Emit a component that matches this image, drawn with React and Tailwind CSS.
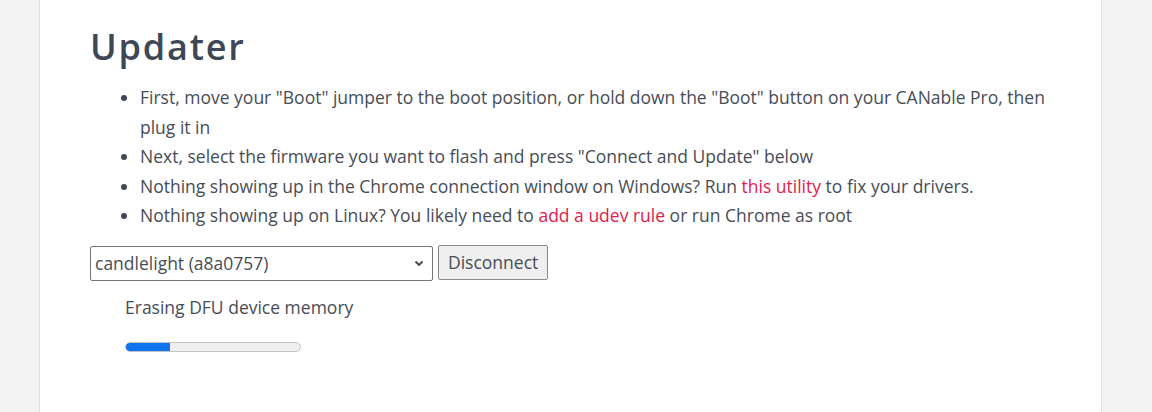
export default function App() {
  return (
    <div className="min-h-screen bg-[#f3f3f3] px-[39px] font-['Open_Sans',sans-serif]">
      <div className="min-h-[412px] w-[1063px] border-x border-[#e2e2e2] bg-white px-[50px] pt-[25px]">
        <h1 className="text-[36px] leading-[43px] font-semibold tracking-[0.05em] text-[#3e4755]">
          Updater
        </h1>

        {/* Steps */}
        <ul className="mt-[15px] list-disc pl-[50px] text-[17.5px] leading-[29.6px] text-[#474d56] marker:text-[#3e4755]">
          <li>
            First, move your "Boot" jumper to the boot position, or hold down the "Boot" button on your CANable Pro, then plug it in
          </li>
          <li>Next, select the firmware you want to flash and press "Connect and Update" below</li>
          <li>
            Nothing showing up in the Chrome connection window on Windows? Run{" "}
            <a className="text-[#e3204e]">this utility</a> to fix your drivers.
          </li>
          <li>
            Nothing showing up on Linux? You likely need to{" "}
            <a className="text-[#e3204e]">add a udev rule</a> or run Chrome as root
          </li>
        </ul>

        <div className="mt-[15px] flex items-start gap-[5px]">
          <div className="flex h-[35px] w-[343px] items-center justify-between rounded-[2px] border border-[#767676] pl-[4px] pr-[7px] text-[17.5px] text-[#474d56]">
            <span>candlelight (a8a0757)</span>
            <svg width="12" height="12" viewBox="0 0 12 12" fill="none" stroke="#444" strokeWidth="1.8">
              <path d="M2.5 4.5 6 8l3.5-3.5" />
            </svg>
          </div>
          <button className="-mt-px h-[35px] rounded-[2px] border border-[#8a8a8a] bg-[#efefef] px-[9px] text-[17.5px] text-[#474d56]">
            Disconnect
          </button>
        </div>

        <div className="pl-[35px]">
          <p className="mt-[13px] text-[17.5px] leading-[26px] text-[#474d56]">Erasing DFU device memory</p>
          <div className="mt-[22px] h-[10px] w-[176px] overflow-hidden rounded-full border border-[#c4c4c4] bg-[#efefef]">
            <div className="h-full bg-[#0f73ee]" style={{ width: "25%" }} />
          </div>
        </div>
      </div>
    </div>
  );
}
